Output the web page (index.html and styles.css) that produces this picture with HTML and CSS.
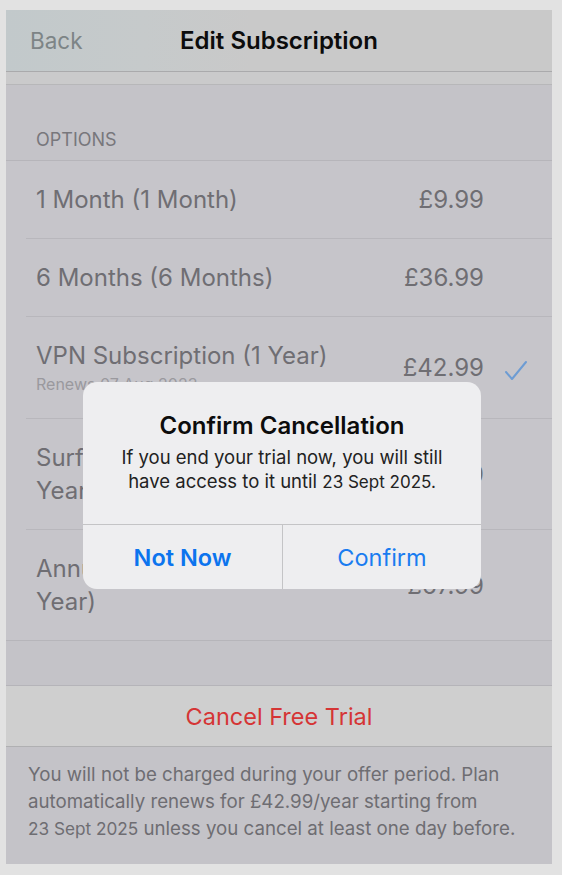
FILE: index.html
```html
<!DOCTYPE html>
<html lang="en">
  <head>
    <meta charset="UTF-8" />
    <meta name="viewport" content="width=device-width, initial-scale=1.0" />
    <title>Edit Subscription</title>
    <link rel="stylesheet" href="styles.css">
  </head>
  <body>
    <div class="screen">
      <!-- nav bar -->
      <div class="nav">
        <span class="nav-back">Back</span>
        <span class="nav-title">Edit Subscription</span>
        <span></span>
      </div>
      <div class="nav-strip"></div>

      <div class="section-header">OPTIONS</div>
      <div class="list">
        <div class="row">
          <div class="name">1 Month (1 Month)</div>
          <div class="price">£9.99</div>
          <div class="check"></div>
        </div>
        <div class="row">
          <div class="name">6 Months (6 Months)</div>
          <div class="price">£36.99</div>
          <div class="check"></div>
        </div>
        <div class="row">
          <div class="name">
            VPN Subscription (1 Year)
            <div class="sub">Renews 07 Aug 2023</div>
          </div>
          <div class="price">£42.99</div>
          <div class="check">
            <svg width="22" height="22" viewBox="0 0 22 22">
              <polyline points="1,12 7,19 21,2" fill="none" stroke="#6d9cd3" stroke-width="2" stroke-linecap="round" stroke-linejoin="round" />
            </svg>
          </div>
        </div>
        <div class="row">
          <div class="name">Surfshark One Subscription (1<br>Year)</div>
          <div class="price">£59.99</div>
          <div class="check"></div>
        </div>
        <div class="row">
          <div class="name">Annual Subscription Bundle (1<br>Year)</div>
          <div class="price">£67.99</div>
          <div class="check"></div>
        </div>
      </div>

      <div class="gap"></div>
      <div class="cancel-btn">Cancel Free Trial</div>
      <p class="footer">
        You will not be charged during your offer period. Plan automatically renews for £42.99/year starting from
        <span class="date">23 Sept 2025</span> unless you cancel at least one day before.
      </p>

      <!-- alert -->
      <div class="alert">
        <div class="alert-body">
          <div class="alert-title">Confirm Cancellation</div>
          <div class="alert-msg">If you end your trial now, you will still have access to it until <span class="date">23 Sept 2025.</span></div>
        </div>
        <div class="alert-actions">
          <div class="alert-btn bold">Not Now</div>
          <div class="alert-btn">Confirm</div>
        </div>
      </div>
    </div>
  </body>
</html>
```

FILE: styles.css
```css
body {
  margin: 0;
  padding: 10px 10px 11px 6px;
  background-color: #e2e2e2;
  font-family: "Inter", "Roboto", sans-serif;
}
.screen {
  position: relative;
  width: 546px;
  height: 854px;
  background-color: #c4c3c8;
  overflow: hidden;
}
.nav {
  height: 61px;
  display: grid;
  grid-template-columns: 1fr auto 1fr;
  align-items: center;
  background: linear-gradient(90deg, #c2c9cb 0%, #c6cacb 25%, #c9c9c9 45%, #c9c9c9 100%);
  border-bottom: 1px solid #aaaaac;
}
.nav-back {
  padding-left: 24px;
  font-size: 22.5px;
  color: #7d8486;
}
.nav-title {
  font-size: 24px;
  font-weight: 600;
  color: #0c0c0c;
}
.nav-strip {
  height: 12px;
  background-color: #cacacb;
  border-bottom: 1px solid #b7b7b9;
}
.section-header {
  height: 76px;
  box-sizing: border-box;
  display: flex;
  align-items: flex-end;
  padding: 0 0 10px 30px;
  font-size: 18px;
  line-height: 20px;
  color: #78777c;
  border-bottom: 1px solid #b6b5ba;
}
.list {
  background-color: #c6c5ca;
  border-bottom: 1px solid #b6b5ba;
}
.row {
  display: flex;
  align-items: center;
  margin-left: 20px;
  padding: 22px 25px 22px 10px;
  border-bottom: 1px solid #b8b7bc;
  font-size: 24px;
  line-height: 33px;
  color: #6f6e73;
}
.row:last-child {
  border-bottom: none;
}
.name {
  flex: 1;
}
.sub {
  font-size: 16px;
  line-height: 24px;
  color: #9a999e;
}
.price {
  text-align: right;
}
.check {
  width: 22px;
  height: 22px;
  margin-left: 21px;
}
.gap {
  height: 44px;
  border-bottom: 1px solid #b5b4b9;
}
.cancel-btn {
  height: 60px;
  display: flex;
  align-items: center;
  justify-content: center;
  background-color: #cfcfcf;
  border-bottom: 1px solid #b0b0b2;
  font-size: 23.5px;
  color: #d53535;
}
.footer {
  margin: 0;
  padding: 14px 28px 0 22px;
  font-size: 18.7px;
  line-height: 27px;
  color: #6e6d72;
}
.date {
  font-size: 0.92em;
  white-space: nowrap;
}
.alert {
  position: absolute;
  top: 372px;
  left: 77px;
  width: 398px;
  border-radius: 14px;
  background-color: #eeeef0;
  overflow: hidden;
}
.alert-body {
  padding: 30px 25px 30px;
  text-align: center;
}
.alert-title {
  font-size: 24px;
  line-height: 28px;
  font-weight: 600;
  color: #0c0c0c;
  margin-bottom: 5px;
}
.alert-msg {
  font-size: 18.5px;
  line-height: 24px;
  color: #222;
}
.alert-actions {
  display: grid;
  grid-template-columns: 1fr 1fr;
  border-top: 1px solid #c4c4c6;
}
.alert-btn {
  height: 64px;
  display: flex;
  align-items: center;
  justify-content: center;
  font-size: 23.5px;
  color: #1a7cf0;
}
.alert-btn + .alert-btn {
  border-left: 1px solid #c4c4c6;
}
.alert-btn.bold {
  font-weight: 600;
  color: #0c74ee;
}
```
